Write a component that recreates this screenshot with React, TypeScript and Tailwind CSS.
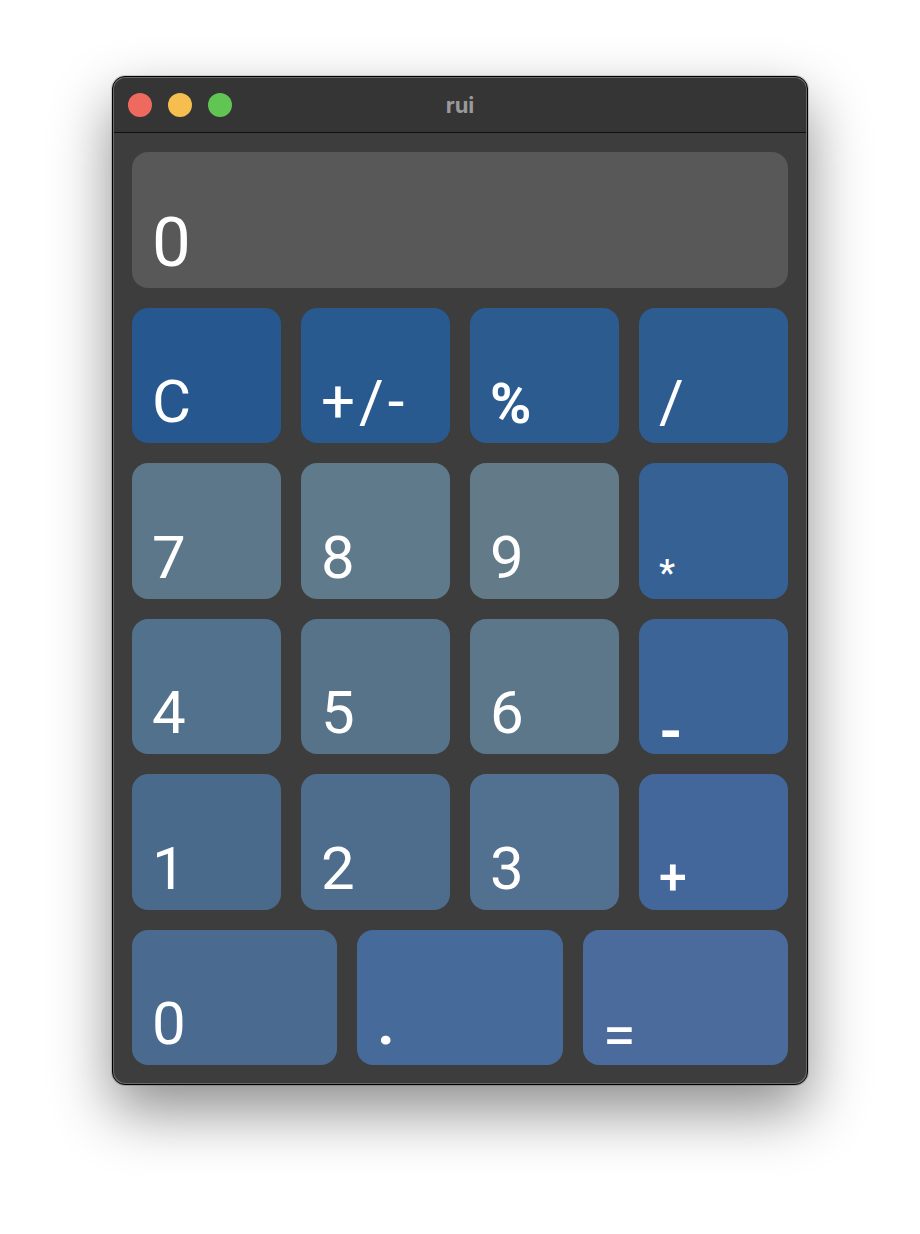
import React from 'react';

type Key = { label: string; bg: string; size?: string; extra?: string };

const rows: Key[][] = [
    [
        { label: 'C', bg: 'bg-[#26588f]' },
        { label: '+/-', bg: 'bg-[#285a90]', extra: 'tracking-[4px]' },
        { label: '%', bg: 'bg-[#2b5b8f]', size: 'text-[56px]', extra: 'font-bold' },
        { label: '/', bg: 'bg-[#2d5c91]' },
    ],
    [
        { label: '7', bg: 'bg-[#5c7789]' },
        { label: '8', bg: 'bg-[#5f7a8a]' },
        { label: '9', bg: 'bg-[#637a88]' },
        { label: '*', bg: 'bg-[#366194]', size: 'text-[36px]', extra: 'font-medium translate-y-[3px]' },
    ],
    [
        { label: '4', bg: 'bg-[#52718c]' },
        { label: '5', bg: 'bg-[#57738a]' },
        { label: '6', bg: 'bg-[#5b7789]' },
        { label: '-', bg: 'bg-[#3c6496]', extra: 'font-bold translate-y-[19px]' },
    ],
    [
        { label: '1', bg: 'bg-[#4a6a8c]' },
        { label: '2', bg: 'bg-[#4e6d8d]' },
        { label: '3', bg: 'bg-[#52708f]' },
        { label: '+', bg: 'bg-[#43679b]', size: 'text-[50px]', extra: 'font-medium translate-y-[3px]' },
    ],
];

const lastRow: Key[] = [
    { label: '0', bg: 'bg-[#4a6b8f]' },
    { label: '.', bg: 'bg-[#466a99]', extra: 'font-bold' },
    { label: '=', bg: 'bg-[#4a6b9b]', extra: 'translate-y-[12px]' },
];

function CalcKey({ k }: { k: Key }) {
    return (
        <div className={`${k.bg} rounded-[16px] flex items-end pl-5 pb-[11px] min-h-0`}>
            <span className={`block leading-none text-white ${k.size ?? 'text-[60px]'} ${k.extra ?? ''}`}>{k.label}</span>
        </div>
    );
}

export default function App() {
    return (
        <div className="min-h-[1234px] bg-white flex justify-center pt-[76px]" style={{ fontFamily: 'Roboto, "DejaVu Sans", sans-serif' }}>
            <div className="w-[696px] h-[1009px] rounded-[13px] border border-black p-px bg-[#6a6a6a] shadow-[0_26px_60px_rgba(0,0,0,0.45),0_0_0_1px_rgba(0,0,0,0.15)]">
                <div className="h-full rounded-[12px] bg-[#3d3d3d] overflow-hidden flex flex-col">
                    {/* title bar */}
                    <div className="relative h-[55px] bg-[#353535] border-b border-[#111] flex items-center px-[14px] gap-4 shrink-0">
                        <span className="w-6 h-6 rounded-full bg-[#ee6a5f]" />
                        <span className="w-6 h-6 rounded-full bg-[#f5be4f]" />
                        <span className="w-6 h-6 rounded-full bg-[#61c554]" />
                        <span className="absolute inset-0 flex items-center justify-center text-[22px] font-bold text-[#9a9a9a]" style={{ fontFamily: 'Inter, "Open Sans", sans-serif' }}>
                            rui
                        </span>
                    </div>

                    <div className="flex-1 px-[18px] pt-[19px] pb-[18px] flex flex-col gap-5 min-h-0">
                        <div className="h-[136px] shrink-0 bg-[#585858] rounded-[16px] flex items-end pl-5 pb-[11px]">
                            <span className="block leading-none text-[69px] text-white">0</span>
                        </div>
                        {rows.map((row, i) => (
                            <div key={i} className="flex-1 grid grid-cols-4 gap-5 min-h-0">
                                {row.map((k) => (
                                    <CalcKey key={k.label} k={k} />
                                ))}
                            </div>
                        ))}
                        <div className="flex-1 grid grid-cols-3 gap-5 min-h-0">
                            {lastRow.map((k) => (
                                <CalcKey key={k.label} k={k} />
                            ))}
                        </div>
                    </div>
                </div>
            </div>
        </div>
    );
}
